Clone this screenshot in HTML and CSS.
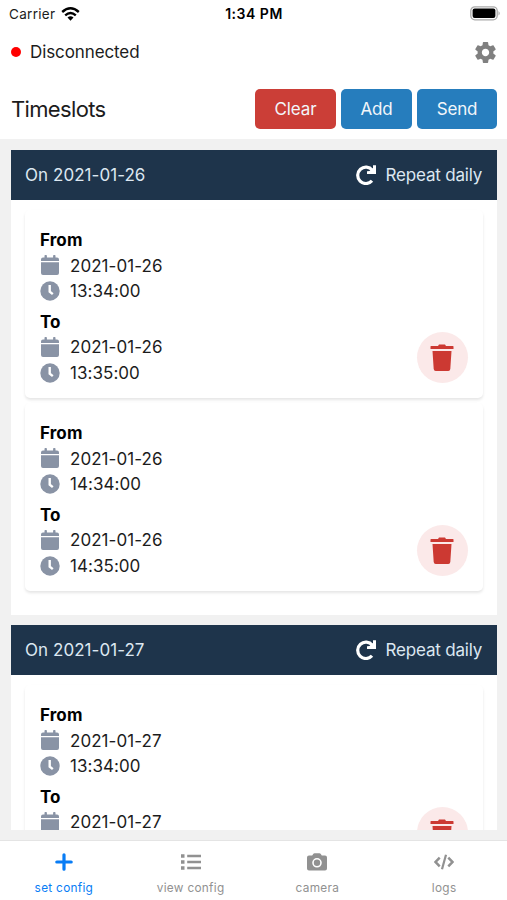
FILE: index.html
```html
<!DOCTYPE html>
<html lang="en">
<head>
<meta charset="utf-8">
<title>Timeslots</title>
<link rel="stylesheet" href="styles.css">
</head>
<body>
<svg class="defs" aria-hidden="true">
  <symbol id="calendar" viewBox="0 0 18 20"><path d="M0 6V4.500Q0 2.500 2 2.500H3.500V.8Q3.500 0 4.300 0H5.100Q5.900 0 5.900.8V2.500H12.100V.8Q12.100 0 12.900 0H13.700Q14.500 0 14.500.8V2.500H16Q18 2.500 18 4.500V6ZM0 7.200H18V18Q18 20 16 20H2Q0 20 0 18Z"/></symbol>
  <symbol id="clock" viewBox="0 0 20 20"><circle cx="10" cy="10" r="9.700"/><path d="M9.700 4V10.600L12.800 13.200" fill="none" stroke="#fff" stroke-width="2.400"/></symbol>
  <symbol id="repeat" viewBox="0 0 20 20"><path d="M16 15.800A8.200 8.200 0 1 1 16.300 5.200" fill="none" stroke="#fff" stroke-width="3.200"/><path d="M20 .3V9.100H11V6.200L13.500 6L17 3V.3Z" fill="#fff"/></symbol>
  <symbol id="trash" viewBox="0 0 24 28"><path d="M1 2H8L9 .5H15L16 2H23Q23.500 2 23.500 2.700V5H.5V2.700Q.5 2 1 2ZM2.500 7H21.500L20.300 25Q20.100 27 18.300 27H5.700Q3.900 27 3.700 25Z"/></symbol>
</svg>
<div class="app">
  <div class="statusbar">
    <div class="carrier">Carrier
      <svg width="19" height="14" viewBox="0 0 19 14"><g fill="none" stroke="#000" stroke-width="2.400"><path d="M1.200 5Q9.500-2.400 17.800 5"/><path d="M4.200 8.300Q9.500 3.700 14.800 8.300"/></g><path d="M6.500 10.500Q9.500 8 12.500 10.500L9.500 13.700Z"/></svg>
    </div>
    <div class="time">1:34 PM</div>
    <svg class="battery" width="31" height="15" viewBox="0 0 31 15"><rect x=".8" y=".8" width="26.400" height="13" rx="4" fill="#fff" stroke="#aaa" stroke-width="1.300"/><rect x="2.600" y="2.500" width="22.800" height="9.600" rx="2"/><path d="M28.500 5Q31 7.300 28.500 9.600Z" fill="#aaa"/></svg>
  </div>
  <div class="connection">
    <span class="dot"></span><span class="state">Disconnected</span>
    <svg class="gear" width="21" height="21" viewBox="2 2 20 20"><path fill="#808080" d="M19.430 12.980c.04-.32.07-.64.07-.98s-.03-.66-.07-.98l2.110-1.650c.19-.15.24-.42.12-.64l-2-3.460c-.12-.22-.39-.3-.61-.22l-2.490 1c-.52-.4-1.080-.73-1.690-.98l-.38-2.650C14.460 2.180 14.250 2 14 2h-4c-.25 0-.46.18-.49.42l-.38 2.650c-.61.25-1.170.59-1.690.98l-2.490-1c-.23-.09-.49 0-.61.22l-2 3.460c-.13.22-.07.49.12.64l2.110 1.650c-.04.32-.07.65-.07.98s.03.66.07.98l-2.110 1.650c-.19.15-.24.42-.12.64l2 3.460c.12.22.39.3.61.22l2.490-1c.52.4 1.080.73 1.690.98l.38 2.650c.03.24.24.42.49.42h4c.25 0 .46-.18.49-.42l.38-2.650c.61-.25 1.170-.59 1.690-.98l2.490 1c.23.09.49 0 .61-.22l2-3.460c.12-.22.07-.49-.12-.64l-2.110-1.650zM12 15.500c-1.930 0-3.500-1.570-3.500-3.500s1.570-3.500 3.500-3.500 3.500 1.570 3.500 3.500-1.570 3.500-3.500 3.500z"/></svg>
  </div>
  <div class="toolbar">
    <h1>Timeslots</h1>
    <button class="btn clear">Clear</button><button class="btn add">Add</button><button class="btn send">Send</button>
  </div>
  <main>
    <div class="scroll">
      <section class="day">
        <header><span>On 2021-01-26</span><svg class="repeat"><use href="#repeat"/></svg><span class="daily">Repeat daily</span></header>
        <div class="slots">
          <article class="slot">
            <div class="times">
              <b>From</b>
              <div class="row"><svg class="cal"><use href="#calendar"/></svg><span>2021-01-26</span></div>
              <div class="row"><svg class="clk"><use href="#clock"/></svg><span>13:34:00</span></div>
              <b class="to">To</b>
              <div class="row"><svg class="cal"><use href="#calendar"/></svg><span>2021-01-26</span></div>
              <div class="row"><svg class="clk"><use href="#clock"/></svg><span>13:35:00</span></div>
            </div>
            <div class="delete"><svg><use href="#trash"/></svg></div>
          </article>
          <article class="slot">
            <div class="times">
              <b>From</b>
              <div class="row"><svg class="cal"><use href="#calendar"/></svg><span>2021-01-26</span></div>
              <div class="row"><svg class="clk"><use href="#clock"/></svg><span>14:34:00</span></div>
              <b class="to">To</b>
              <div class="row"><svg class="cal"><use href="#calendar"/></svg><span>2021-01-26</span></div>
              <div class="row"><svg class="clk"><use href="#clock"/></svg><span>14:35:00</span></div>
            </div>
            <div class="delete"><svg><use href="#trash"/></svg></div>
          </article>
        </div>
      </section>
      <section class="day">
        <header><span>On 2021-01-27</span><svg class="repeat"><use href="#repeat"/></svg><span class="daily">Repeat daily</span></header>
        <div class="slots">
          <article class="slot">
            <div class="times">
              <b>From</b>
              <div class="row"><svg class="cal"><use href="#calendar"/></svg><span>2021-01-27</span></div>
              <div class="row"><svg class="clk"><use href="#clock"/></svg><span>13:34:00</span></div>
              <b class="to">To</b>
              <div class="row"><svg class="cal"><use href="#calendar"/></svg><span>2021-01-27</span></div>
            </div>
            <div class="delete"><svg><use href="#trash"/></svg></div>
          </article>
        </div>
      </section>
    </div>
  </main>
  <nav>
    <div class="tab active"><svg width="20" height="20" viewBox="0 0 20 20"><path d="M10 2.800V17.200M2.800 10H17.200" stroke="currentColor" stroke-width="3.200" stroke-linecap="round"/></svg><span>set config</span></div>
    <div class="tab"><svg width="20" height="20" viewBox="0 0 20 20"><path d="M0 4H3.500M0 10H3.500M0 16H3.500" stroke="currentColor" stroke-width="3.600"/><path d="M6.200 4H20M6.200 10H20M6.200 16H20" stroke="currentColor" stroke-width="2.300"/></svg><span>view config</span></div>
    <div class="tab"><svg width="20" height="20" viewBox="0 0 20 20"><path fill="currentColor" d="M2 3.500H5.200L6.400 1.800Q6.800 1.200 7.500 1.200H12.500Q13.200 1.200 13.600 1.800L14.800 3.500H18Q20 3.500 20 5.500V16.500Q20 18.500 18 18.500H2Q0 18.500 0 16.500V5.500Q0 3.500 2 3.500Z"/><circle cx="10" cy="10.800" r="4" fill="none" stroke="#fff" stroke-width="1.600"/></svg><span>camera</span></div>
    <div class="tab"><svg width="20" height="20" viewBox="0 0 20 20"><path d="M5.700 5.700L1.600 10L5.700 14.300M14.300 5.700L18.400 10L14.300 14.300" fill="none" stroke="currentColor" stroke-width="2.500"/><path d="M12 2.800L8 17.200" stroke="currentColor" stroke-width="2.200"/></svg><span>logs</span></div>
  </nav>
</div>
</body>
</html>
```
FILE: styles.css
```css
* { box-sizing: border-box; }
body { margin: 0; font-family: Inter, "Liberation Sans", sans-serif; color: #1c1c1c; background: #fff; }
svg { display: block; flex: none; }
.defs { display: none; }
.app { height: 900px; width: 507px; display: flex; flex-direction: column; overflow: hidden; }
.statusbar { height: 28px; display: grid; grid-template-columns: 1fr auto 1fr; align-items: center; padding: 0 6px 0 9px; font-size: 13.5px; }
.carrier { display: flex; align-items: center; gap: 6px; letter-spacing: .3px; padding-bottom: 1px; }
.time { font-weight: 600; color: #000; font-size: 14px; letter-spacing: .5px; margin-right: 2px; padding-bottom: 2px; }
.battery { justify-self: end; margin-bottom: 2px; }
.connection { height: 48px; display: flex; align-items: center; padding: 0 11px 0 11px; font-size: 17px; }
.state { letter-spacing: -.1px; }
.dot { width: 10px; height: 10px; border-radius: 50%; background: #f00; margin-right: 9px; }
.gear { margin-left: auto; }
.toolbar { height: 63px; padding: 13px 10px 10px 11px; display: flex; gap: 5px; align-items: center; }
h1 { margin: 0 auto 0 0; font-size: 22px; font-weight: 400; letter-spacing: -.65px; }
.btn { height: 40px; border: 0; border-radius: 5px; padding: 0; color: #f2f6fa; background: #267dbd; font: 400 17px Inter, sans-serif; letter-spacing: -.15px; }
.clear { width: 81px; background: #cb3e37; }
.add { width: 71px; }
.send { width: 80px; }
main { height: 701px; background: #f1f1f1; padding: 11px 10px 10px 11px; }
.scroll { height: 680px; overflow: hidden; }
.day { background: #fff; margin-bottom: 10px; height: 465px; }
.day header { height: 50px; background: #1e344b; color: #dce7f1; display: flex; align-items: center; padding: 0 15px 0 14px; font-size: 17px; letter-spacing: .05px; }
.repeat { width: 20px; height: 20px; margin-left: auto; margin-right: 10px; }
.daily { letter-spacing: -.2px; }
.slots { padding: 10px 14px 0; display: flex; flex-direction: column; gap: 5px; }
.slot { height: 188px; padding: 17px 15px 15px; display: flex; justify-content: space-between; align-items: flex-end; border-radius: 5px; box-shadow: 0 2px 3px #e6e6e6; }
.times { align-self: flex-start; font-size: 17px; line-height: 25.600px; letter-spacing: .05px; }
.times b { display: block; font-weight: 700; color: #000; font-size: 17px; letter-spacing: .1px; padding-top: 1.200px; height: 25.600px; }
.times .to { margin-top: 5px; }
.row { display: flex; align-items: center; height: 25.600px; }
.row span { padding-top: 1.800px; }
.row svg { fill: #8993a5; width: 20px; height: 20px; margin-right: 10px; }
.delete { width: 51px; height: 51px; border-radius: 50%; background: #fbe9e9; display: grid; place-items: center; }
.delete svg { width: 24px; height: 28px; margin-right: 1px; fill: #cc3932; }
nav { height: 60px; border-top: 1px solid #e4e4e4; display: grid; grid-template-columns: repeat(4, 1fr); }
.tab { display: flex; flex-direction: column; align-items: center; padding: 11px 0 0 1px; gap: 8px; color: #919191; font-size: 11.800px; line-height: 17px; letter-spacing: .3px; }
.active { color: #087cf5; }
```
